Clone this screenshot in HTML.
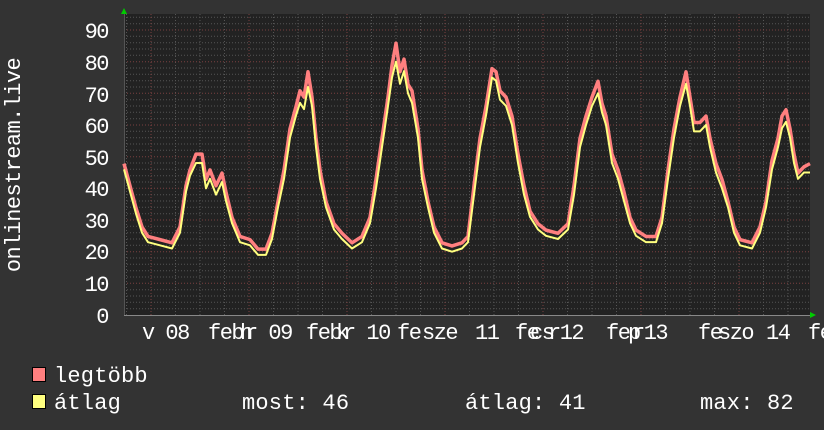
<!DOCTYPE html>
<html><head><meta charset="utf-8"><style>
html,body{margin:0;padding:0;background:#333;width:824px;height:430px;overflow:hidden}
text{font-family:"Liberation Mono","DejaVu Sans Mono",monospace;fill:#fff}
</style></head><body>
<svg width="824" height="430" xmlns="http://www.w3.org/2000/svg">
<rect x="124" y="14" width="686" height="301" fill="#222"/>
<g id="grid" stroke-dasharray="1,2">
<g stroke="#555" stroke-width="1">
<path d="M124 308.7H810M124 302.3H810M124 296H810M124 289.7H810M124 277H810M124 270.7H810M124 264.3H810M124 258H810M124 245.3H810M124 239H810M124 232.7H810M124 226.3H810M124 213.7H810M124 207.3H810M124 201H810M124 194.7H810M124 182H810M124 175.7H810M124 169.3H810M124 163H810M124 150.3H810M124 144H810M124 137.7H810M124 131.3H810M124 118.7H810M124 112.3H810M124 106H810M124 99.7H810M124 87H810M124 80.7H810M124 74.3H810M124 68H810M124 55.3H810M124 49H810M124 42.7H810M124 36.3H810M124 23.7H810M124 17.3H810"/>
<path d="M175.5 14V315M200 14V315M224.5 14V315M273.5 14V315M298 14V315M322.5 14V315M371.5 14V315M396 14V315M420.5 14V315M469.5 14V315M494 14V315M518.5 14V315M567.5 14V315M592 14V315M616.5 14V315M665.5 14V315M690 14V315M714.5 14V315M763.5 14V315M788 14V315M126.5 14V315"/>
</g>
<g stroke="#7a4040" stroke-width="1">
<path d="M124 283.3H810M124 251.7H810M124 220H810M124 188.3H810M124 156.7H810M124 125H810M124 93.3H810M124 61.7H810M124 30H810"/>
<path d="M151 14V315M249 14V315M347 14V315M445 14V315M543 14V315M641 14V315M739 14V315"/>
</g>
</g>
<path d="M124 315.5H812" stroke="#888" stroke-width="1"/>
<path d="M124.5 12V315" stroke="#555" stroke-width="1"/>
<polygon points="121,14 127,14 124,8" fill="#0c0"/>
<polygon points="810,312 810,318 816,315" fill="#0c0"/>
<g transform="translate(0,315) scale(1,-3.167)">
<polyline fill="none" stroke="#ff7f7f" stroke-width="3.5" vector-effect="non-scaling-stroke" stroke-linejoin="round" transform="translate(0,0.8)" points="124,47 130,40 136,33 142,27 148,24 160,23 172,22 180,27 186,40 190,45 196,50 202,50 206,42 210,45 216,40 222,44 226,38 232,30 240,24 250,23 258,20 266,20 272,25 278,35 284,45 290,58 296,65 300,70 304,68 308,76 312,68 316,55 320,45 326,35 334,28 342,25 352,22 362,24 370,30 376,42 382,55 388,68 392,78 396,85 400,76 404,80 408,72 412,70 418,58 422,45 428,35 434,27 442,22 452,21 462,22 468,24 474,40 480,55 486,65 492,77 496,76 500,70 506,68 512,62 518,50 524,40 530,32 538,28 546,26 558,25 568,28 574,40 580,55 586,62 592,68 598,73 602,66 606,62 612,50 618,45 624,38 630,30 636,26 646,24 656,24 662,30 668,45 674,58 680,68 686,76 690,68 694,60 700,60 706,62 710,55 716,47 722,42 728,35 734,27 740,23 752,22 760,27 766,35 772,48 778,55 782,62 786,64 790,58 794,50 798,44 804,46 810,47"/>
<polyline fill="none" stroke="#ffff7f" stroke-width="2" vector-effect="non-scaling-stroke" stroke-linejoin="round" points="124,46 130,39 136,32 142,26 148,23 160,22 172,21 180,26 186,39 190,44 196,48 202,48 206,40 210,43 216,38 222,42 226,36 232,29 240,23 250,22 258,19 266,19 272,24 278,34 284,43 290,56 296,63 300,67 304,65 308,72 312,66 316,53 320,43 326,34 334,27 342,24 352,21 362,23 370,29 376,40 382,53 388,66 392,75 396,80 400,73 404,77 408,70 412,67 418,56 422,43 428,34 434,26 442,21 452,20 462,21 468,23 474,38 480,53 486,63 492,75 496,74 500,68 506,66 512,60 518,48 524,38 530,31 538,27 546,25 558,24 568,27 574,38 580,53 586,60 592,66 598,70 602,64 606,60 612,48 618,43 624,36 630,29 636,25 646,23 656,23 662,29 668,43 674,56 680,66 686,73 690,66 694,58 700,58 706,60 710,53 716,45 722,40 728,34 734,26 740,22 752,21 760,26 766,34 772,46 778,53 782,59 786,61 790,56 794,48 798,43 804,45 810,45"/>
</g>
<g font-size="22" text-anchor="end" letter-spacing="-1.5">
<text x="108" y="38">90</text><text x="108" y="70">80</text><text x="108" y="102">70</text><text x="108" y="133">60</text><text x="108" y="165">50</text><text x="108" y="196">40</text><text x="108" y="228">30</text><text x="108" y="259">20</text><text x="108" y="291">10</text><text x="108" y="323">0</text>
</g>
<text transform="translate(20,165) rotate(-90)" font-size="22" letter-spacing="-0.6" text-anchor="middle">onlinestream.live</text>
<g font-size="22" letter-spacing="-1.5">
<text x="142" y="339">v 08</text>
<text x="208" y="339">feb</text><text x="240" y="339">h</text><text x="245" y="339">r 09</text>
<text x="306" y="339">feb</text><text x="336" y="339">k</text><text x="343" y="339">r 10</text>
<text x="397" y="339">fe</text><text x="422" y="339">sze</text><text x="475" y="339">11</text>
<text x="515" y="339">fe</text><text x="530" y="339">cs</text><text x="548" y="339">r12</text>
<text x="606" y="339">fe</text><text x="628" y="339">p</text><text x="632" y="339">r13</text>
<text x="698" y="339">fe</text><text x="718" y="339">szo</text><text x="766" y="339">14</text>
<text x="808" y="339">fe</text>
</g>
<rect x="32.5" y="367.5" width="13" height="14" fill="#ff7f7f" stroke="#000"/>
<rect x="32.5" y="394.5" width="13" height="14" fill="#ffff7f" stroke="#000"/>
<g font-size="22" letter-spacing="0.2">
<text x="54" y="382">legtöbb</text>
<text x="54" y="409">átlag</text>
<text x="242" y="409">most: 46</text>
<text x="465" y="409">átlag: 41</text>
<text x="700" y="409">max: 82</text>
</g>
</svg>
</body></html>
